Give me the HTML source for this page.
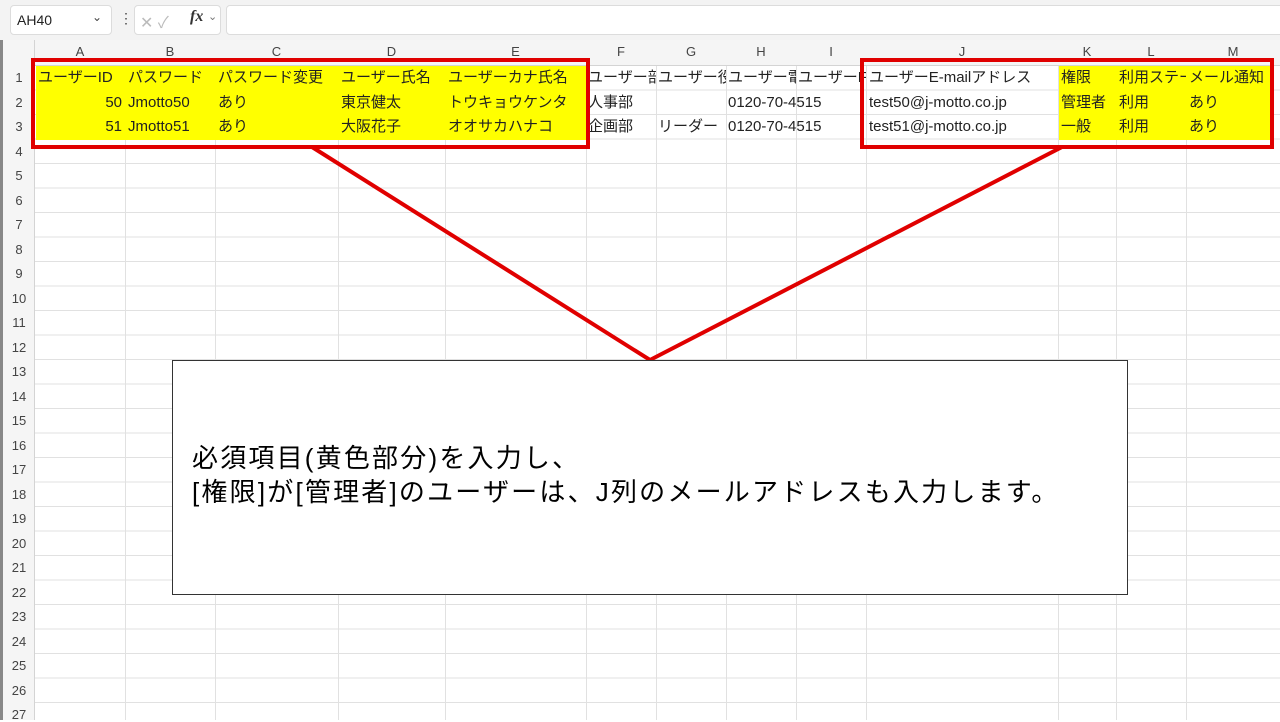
<!DOCTYPE html>
<html><head><meta charset="utf-8"><style>
*{margin:0;padding:0;box-sizing:border-box}
body{width:1280px;height:720px;overflow:hidden;background:#fff;position:relative;font-family:"Liberation Sans","Noto Sans CJK JP",sans-serif}
.a{position:absolute}
.top{left:0;top:0;width:1280px;height:40px;background:#f3f3f3}
.box{background:#fff;border:1px solid #dcdcdc;border-radius:4px}
.colh{left:35px;top:40px;width:1245px;height:26px;background:#f5f5f5;border-bottom:1px solid #d4d4d4}
.rowh{left:3px;top:40px;width:32px;height:680px;background:#f5f5f5;border-right:1px solid #d4d4d4}
.grid{left:35px;top:66px;width:1245px;height:654px;background:repeating-linear-gradient(to bottom,transparent 0,transparent 23.5px,#e1e1e1 23.5px,#e1e1e1 24.5px)}
.v{top:40px;width:1px;height:680px;background:#e1e1e1}
.ch{top:44px;font-size:13px;color:#444;text-align:center}
.rn{left:3px;width:32px;font-size:13px;color:#444;text-align:center}
.c{font-size:15px;color:#222;white-space:nowrap;overflow:hidden;line-height:24px}
.y{background:#ffff00}
.red{border:4px solid #e00000}
</style></head><body>
<div class="a top"></div>
<div class="a box" style="left:10px;top:5px;width:102px;height:30px"></div>
<div class="a" style="left:17px;top:12px;font-size:14px;color:#222">AH40</div>
<div class="a" style="left:92px;top:10px;font-size:12px;color:#444">⌄</div>
<div class="a" style="left:119px;top:10px;font-size:14px;color:#444">⋮</div>
<div class="a box" style="left:134px;top:5px;width:87px;height:30px"></div>
<div class="a" style="left:140px;top:9px;font-size:16px;color:#bbb">✕ ✓</div>
<div class="a" style="left:190px;top:8px;font-size:16px;color:#333;font-style:italic;font-family:'Liberation Serif',serif;font-weight:bold">fx</div>
<div class="a" style="left:208px;top:10px;font-size:11px;color:#777">⌄</div>
<div class="a box" style="left:226px;top:5px;width:1060px;height:30px"></div>
<div class="a" style="left:0;top:40px;width:3px;height:680px;background:#888"></div>
<div class="a grid"></div>
<div class="a v" style="left:125px"></div><div class="a v" style="left:215px"></div><div class="a v" style="left:338px"></div><div class="a v" style="left:445px"></div><div class="a v" style="left:586px"></div><div class="a v" style="left:656px"></div><div class="a v" style="left:726px"></div><div class="a v" style="left:796px"></div><div class="a v" style="left:866px"></div><div class="a v" style="left:1058px"></div><div class="a v" style="left:1116px"></div><div class="a v" style="left:1186px"></div>
<div class="a colh"></div>
<div class="a rowh"></div>
<div class="a y" style="left:36px;top:66px;width:550px;height:74px"></div>
<div class="a y" style="left:1059px;top:66px;width:212px;height:74px"></div>
<div class="a ch" style="left:35px;width:90px">A</div><div class="a ch" style="left:125px;width:90px">B</div><div class="a ch" style="left:215px;width:123px">C</div><div class="a ch" style="left:338px;width:107px">D</div><div class="a ch" style="left:445px;width:141px">E</div><div class="a ch" style="left:586px;width:70px">F</div><div class="a ch" style="left:656px;width:70px">G</div><div class="a ch" style="left:726px;width:70px">H</div><div class="a ch" style="left:796px;width:70px">I</div><div class="a ch" style="left:866px;width:192px">J</div><div class="a ch" style="left:1058px;width:58px">K</div><div class="a ch" style="left:1116px;width:70px">L</div><div class="a ch" style="left:1186px;width:94px">M</div>
<div class="a rn" style="top:70px">1</div><div class="a rn" style="top:94.5px">2</div><div class="a rn" style="top:119px">3</div><div class="a rn" style="top:143.5px">4</div><div class="a rn" style="top:168px">5</div><div class="a rn" style="top:192.5px">6</div><div class="a rn" style="top:217px">7</div><div class="a rn" style="top:241.5px">8</div><div class="a rn" style="top:266px">9</div><div class="a rn" style="top:290.5px">10</div><div class="a rn" style="top:315px">11</div><div class="a rn" style="top:339.5px">12</div><div class="a rn" style="top:364px">13</div><div class="a rn" style="top:388.5px">14</div><div class="a rn" style="top:413px">15</div><div class="a rn" style="top:437.5px">16</div><div class="a rn" style="top:462px">17</div><div class="a rn" style="top:486.5px">18</div><div class="a rn" style="top:511px">19</div><div class="a rn" style="top:535.5px">20</div><div class="a rn" style="top:560px">21</div><div class="a rn" style="top:584.5px">22</div><div class="a rn" style="top:609px">23</div><div class="a rn" style="top:633.5px">24</div><div class="a rn" style="top:658px">25</div><div class="a rn" style="top:682.5px">26</div><div class="a rn" style="top:707px">27</div>
<div class="a c" style="left:38px;top:66px;width:87px">ユーザーID</div>
<div class="a c" style="left:128px;top:66px;width:87px">パスワード</div>
<div class="a c" style="left:218px;top:66px">パスワード変更</div>
<div class="a c" style="left:341px;top:66px">ユーザー氏名</div>
<div class="a c" style="left:448px;top:66px">ユーザーカナ氏名</div>
<div class="a c" style="left:588px;top:66px;width:68px">ユーザー部</div>
<div class="a c" style="left:658px;top:66px;width:68px">ユーザー役</div>
<div class="a c" style="left:728px;top:66px;width:68px">ユーザー電</div>
<div class="a c" style="left:798px;top:66px;width:68px">ユーザーF</div>
<div class="a c" style="left:869px;top:66px">ユーザーE-mailアドレス</div>
<div class="a c" style="left:1061px;top:66px">権限</div>
<div class="a c" style="left:1119px;top:66px;width:67px">利用ステータス</div>
<div class="a c" style="left:1189px;top:66px;width:82px">メール通知</div>
<div class="a c" style="left:38px;top:90.5px;width:84px;text-align:right">50</div>
<div class="a c" style="left:128px;top:90.5px">Jmotto50</div>
<div class="a c" style="left:218px;top:90.5px">あり</div>
<div class="a c" style="left:341px;top:90.5px">東京健太</div>
<div class="a c" style="left:448px;top:90.5px">トウキョウケンタ</div>
<div class="a c" style="left:588px;top:90.5px">人事部</div>
<div class="a c" style="left:728px;top:90.5px">0120-70-4515</div>
<div class="a c" style="left:869px;top:90.5px">test50@j-motto.co.jp</div>
<div class="a c" style="left:1061px;top:90.5px">管理者</div>
<div class="a c" style="left:1119px;top:90.5px">利用</div>
<div class="a c" style="left:1189px;top:90.5px">あり</div>
<div class="a c" style="left:38px;top:115px;width:84px;text-align:right">51</div>
<div class="a c" style="left:128px;top:115px">Jmotto51</div>
<div class="a c" style="left:218px;top:115px">あり</div>
<div class="a c" style="left:341px;top:115px">大阪花子</div>
<div class="a c" style="left:448px;top:115px">オオサカハナコ</div>
<div class="a c" style="left:588px;top:115px">企画部</div>
<div class="a c" style="left:658px;top:115px">リーダー</div>
<div class="a c" style="left:728px;top:115px">0120-70-4515</div>
<div class="a c" style="left:869px;top:115px">test51@j-motto.co.jp</div>
<div class="a c" style="left:1061px;top:115px">一般</div>
<div class="a c" style="left:1119px;top:115px">利用</div>
<div class="a c" style="left:1189px;top:115px">あり</div>
<div class="a red" style="left:31px;top:58px;width:559px;height:91px"></div>
<div class="a red" style="left:860px;top:58px;width:414px;height:91px"></div>
<svg class="a" style="left:0;top:0" width="1280" height="720"><polyline points="312,147 650,360 1062,147" fill="none" stroke="#e00000" stroke-width="4"/></svg>
<div class="a" style="left:172px;top:360px;width:956px;height:235px;background:#fff;border:1px solid #333"></div>
<div class="a" style="left:192px;top:441px;font-size:26px;letter-spacing:2.2px;line-height:34px;color:#000;white-space:nowrap">必須項目(黄色部分)を入力し、<br>[権限]が[管理者]のユーザーは、J列のメールアドレスも入力します。</div>
</body></html>
